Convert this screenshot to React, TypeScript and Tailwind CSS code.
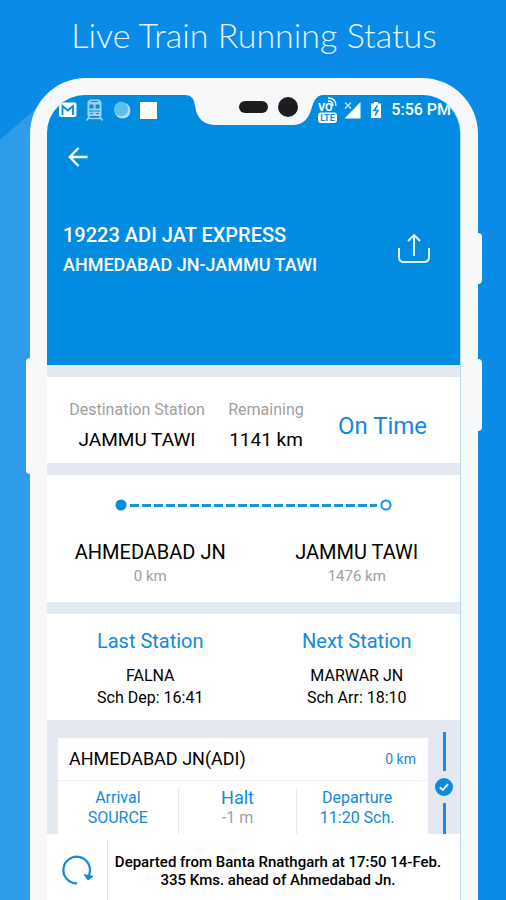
import React from 'react';

const stops = [
  { name: 'AHMEDABAD JN', distance: '0 km' },
  { name: 'JAMMU TAWI', distance: '1476 km' },
];

const nearby = [
  { title: 'Last Station', station: 'FALNA', time: 'Sch Dep: 16:41' },
  { title: 'Next Station', station: 'MARWAR JN', time: 'Sch Arr: 18:10' },
];

const Notch: React.FC = () => (
  <svg
    className="absolute left-1/2 top-0 -translate-x-1/2"
    width="138"
    height="31"
    viewBox="0 0 138 31"
    aria-hidden="true"
  >
    <path d="M0 0C7 0 9 4 10 11C12 24 19 30 31 30H107C119 30 124 23 127 12C129 5 132 0 138 0Z" fill="#f6f8fa" />
    <rect x="54" y="6" width="29" height="12" rx="6" fill="#1d1d20" />
    <circle cx="103" cy="12" r="10" fill="#1d1d20" />
  </svg>
);

const StatusBar: React.FC = () => (
  <div className="flex h-[30px] items-center justify-between pl-3 pr-[9px] text-white">
    <div className="flex items-center gap-[9px]">
      {/* Mail */}
      <svg width="18" height="18" viewBox="0 0 18 18" aria-hidden="true">
        <rect x="0" y="1.500" width="17.500" height="14.500" rx="2" fill="#fff" />
        <path d="M3.500 14V5L8.800 9.500L14 5V14" fill="none" stroke="#018ce1" strokeWidth="1.800" />
      </svg>
      {/* Train */}
      <svg width="18" height="22" viewBox="0 0 18 22" aria-hidden="true">
        <path d="M4 .5H13L15.500 3V17H1.500V3Z" fill="#9dd0f5" />
        <path d="M5 2.500H12" stroke="#018ce1" />
        <rect x="3.500" y="5.500" width="4" height="4" fill="#018ce1" />
        <rect x="9.500" y="5.500" width="4" height="4" fill="#018ce1" />
        <path d="M3 12H14M4 14.500H7M10 14.500H13" stroke="#018ce1" />
        <path d="M3.500 17L.5 21.500M13.500 17L16.500 21.500M2 19.500H15" stroke="#9dd0f5" strokeWidth="1.500" />
      </svg>
      {/* Globe */}
      <svg width="18" height="18" viewBox="0 0 18 18" aria-hidden="true">
        <circle cx="9.500" cy="9.500" r="8" fill="#a5e0f8" />
        <circle cx="8" cy="8" r="7.200" fill="#5cbff0" />
      </svg>
      <svg width="17" height="17" viewBox="0 0 17 17" aria-hidden="true">
        <rect width="17" height="17" fill="#fff" />
      </svg>
    </div>
    <div className="flex items-center gap-[9px]">
      <div className="flex items-center gap-[6px]">
        {/* VoLTE */}
        <svg width="20" height="28" viewBox="0 0 20 28" fontFamily="Roboto, sans-serif" fontWeight="700" aria-hidden="true">
          <text x="0" y="15" fontSize="11" fill="#fff">VO</text>
          <path d="M10 5Q15 5 15 10M10 2Q18 2 18 10" fill="none" stroke="#fff" strokeWidth="1.300" />
          <rect x="0" y="16.500" width="19" height="10.500" rx="3" fill="#fff" />
          <text x="9.500" y="25" fontSize="9" textAnchor="middle" fill="#018ce1">LTE</text>
        </svg>
        {/* Mobile signal */}
        <svg width="17" height="18" viewBox="0 0 17 18" aria-hidden="true">
          <path d="M16.500 1V17.500H.5Z" fill="#fff" />
          <path d="M1 1.500L7 7.500M7 1.500L1 7.500" stroke="#bfe1f8" strokeWidth="1.500" />
        </svg>
      </div>
      {/* Battery */}
      <svg width="12" height="18" viewBox="0 0 12 18" aria-hidden="true">
        <path d="M4 1H8V2.500H11V17H1V2.500H4Z" fill="#fff" />
        <path d="M7.500 4.500L4 9.500H8L5 14.500" fill="none" stroke="#018ce1" strokeWidth="1.500" />
      </svg>
      <span className="text-base leading-5 font-medium">5:56 PM</span>
    </div>
  </div>
);

const Header: React.FC = () => (
  <header className="bg-[#018ce1] pb-[85px] text-white">
    <StatusBar />
    <button type="button" aria-label="Back" className="ml-[21px] mt-[22px] block">
      <svg width="20" height="20" viewBox="0 0 20 20" fill="none" stroke="#fff" strokeWidth="2.400" aria-hidden="true">
        <path d="M10.500 1L1.800 10L10.500 19M2 10H19.500" />
      </svg>
    </button>
    <div className="mt-[53px] flex items-center justify-between pl-4 pr-[30px]">
      <div>
        <h2 className="text-xl leading-[30px] font-medium">19223 ADI JAT EXPRESS</h2>
        <p className="text-lg leading-[30px] font-medium">AHMEDABAD JN-JAMMU TAWI</p>
      </div>
      <button type="button" aria-label="Share">
        <svg width="32" height="32" viewBox="0 0 32 32" fill="none" stroke="#e3f3fd" strokeWidth="2" aria-hidden="true">
          <path d="M1 14V23Q1 28 6 28H26Q31 28 31 23V14" />
          <path d="M16 22V1M10 7L16 1L22 7" />
        </svg>
      </button>
    </div>
  </header>
);

const Summary: React.FC = () => (
  <section className="grid grid-cols-[180fr_78fr_155fr] justify-items-center bg-white pt-[23px] pb-[11px] whitespace-nowrap">
    <div className="flex flex-col items-center gap-2">
      <span className="text-base leading-5 text-[#a0a0a0]">Destination Station</span>
      <span className="text-[19px] leading-6 text-black">JAMMU TAWI</span>
    </div>
    <div className="flex flex-col items-center gap-2">
      <span className="text-base leading-5 text-[#a0a0a0]">Remaining</span>
      <span className="text-[19px] leading-6 text-black">1141 km</span>
    </div>
    <span className="self-center text-2xl leading-7 text-[#1389de]">On Time</span>
  </section>
);

const Route: React.FC = () => (
  <section className="bg-white pt-6 pb-4">
    <div className="flex items-center gap-[3px] px-[68px]">
      <svg className="shrink-0" width="12" height="12" viewBox="0 0 12 12" aria-hidden="true">
        <circle cx="6" cy="6" r="5.500" fill="#018ce1" />
      </svg>
      <svg className="min-w-0 flex-1" height="3" aria-hidden="true">
        <line x1="0" y1="1.500" x2="100%" y2="1.500" stroke="#1a93da" strokeWidth="3" strokeDasharray="9 3" />
      </svg>
      <svg className="shrink-0" width="12" height="12" viewBox="0 0 12 12" aria-hidden="true">
        <circle cx="6" cy="6" r="4.600" fill="#fff" stroke="#1a93da" strokeWidth="2" />
      </svg>
    </div>
    <div className="mt-[27px] grid grid-cols-2 text-center">
      {stops.map((stop) => (
        <div key={stop.name}>
          <h3 className="text-xl leading-7 text-black">{stop.name}</h3>
          <p className="text-[15px] leading-5 text-[#a0a0a0]">{stop.distance}</p>
        </div>
      ))}
    </div>
  </section>
);

const NearbyStations: React.FC = () => (
  <section className="grid grid-cols-2 bg-white pt-[15px] pb-[11px] text-center">
    {nearby.map((item) => (
      <div key={item.title}>
        <h3 className="mb-3 text-xl leading-6 text-[#1389de]">{item.title}</h3>
        <p className="text-base leading-[22px] text-black">{item.station}</p>
        <p className="text-base leading-[22px] text-black">{item.time}</p>
      </div>
    ))}
  </section>
);

const StationList: React.FC = () => (
  <section className="flex pl-[11px]">
    <article className="mt-[6px] flex-1 bg-white">
      <div className="flex items-center justify-between border-b border-[#edf0f4] py-[7px] pl-[11px] pr-3">
        <h3 className="text-lg leading-7 text-black">AHMEDABAD JN(ADI)</h3>
        <span className="text-sm leading-5 text-[#1389de]">0 km</span>
      </div>
      <div className="mt-[7px] grid grid-cols-[120fr_120fr_131fr] text-center text-base leading-5 text-[#1389de]">
        <div className="pb-[6px]">
          <p>Arrival</p>
          <p>SOURCE</p>
        </div>
        <div className="border-x border-[#e6eaef]">
          <p className="text-lg leading-5">Halt</p>
          <p className="text-[#a0a0a0]">-1 m</p>
        </div>
        <div className="pr-[11px]">
          <p>Departure</p>
          <p>11:20 Sch.</p>
        </div>
      </div>
    </article>
    {/* Progress rail */}
    <div className="flex w-8 flex-col items-center">
      <div className="h-[39px] w-[3px] bg-[#1a8bdf]" />
      <svg className="my-[7px]" width="18" height="18" viewBox="0 0 18 18" aria-hidden="true">
        <circle cx="9" cy="9" r="9" fill="#0f8ae0" />
        <path d="M4.800 9.300L7.800 12L13 6.200" fill="none" stroke="#fff" strokeWidth="1.800" />
      </svg>
      <div className="w-[3px] flex-1 bg-[#1a8bdf]" />
    </div>
  </section>
);

const LiveUpdate: React.FC = () => (
  <footer className="flex flex-1 bg-white pt-[6px]">
    <button type="button" aria-label="Refresh" className="flex w-[60px] shrink-0 justify-center pt-[14px]">
      <svg width="32" height="32" viewBox="0 0 32 32" fill="none" stroke="#1389de" strokeWidth="2.200" aria-hidden="true">
        <path d="M16 29.300A13.300 13.300 0 1 1 28 21" />
        <path d="M24 21L27 25.500L31.500 22.500Z" fill="#1389de" strokeWidth="1.500" />
      </svg>
    </button>
    <p className="flex-1 border-l border-[#dfe3e8] pt-[13px] pr-3 text-center text-[15px] leading-[18px] font-medium text-black">
      Departed from Banta Rnathgarh at 17:50 14-Feb.
      <br />
      335 Kms. ahead of Ahmedabad Jn.
    </p>
  </footer>
);

export default function App() {
  return (
    <main className="relative flex min-h-screen flex-col overflow-hidden bg-[#0b8be8] pl-[30px] pr-7 font-['Roboto',sans-serif]">
      {/* Light wedge behind the phone */}
      <div className="absolute top-[98px] bottom-0 left-0 w-12 bg-[#2f9ceb] [clip-path:polygon(0_42px,100%_0,100%_100%,0_100%)]" />

      <h1 className="pt-[15px] pb-[23px] text-center font-['Lato',sans-serif] text-[34px] leading-10 font-light text-[#e6f3fe]">
        Live Train Running Status
      </h1>

      <div className="relative flex flex-1 flex-col">
        {/* Side keys */}
        <div className="absolute top-[280px] -left-1 h-[116px] w-2 rounded-l bg-[#f6f8fa]" />
        <div className="absolute top-[155px] -right-1 h-[51px] w-2 rounded-r bg-[#f6f8fa]" />
        <div className="absolute top-[281px] -right-1 h-[72px] w-2 rounded-r bg-[#f6f8fa]" />

        <div className="relative flex flex-1 flex-col rounded-t-[56px] bg-[#f6f8fa] px-[17px] pt-[17px]">
          <div className="relative flex flex-1 flex-col overflow-hidden rounded-t-[38px] border-r border-[#b5dbf8] bg-[#e4e8f1]">
            <Header />
            <Notch />
            <div className="flex flex-col gap-3 pt-3">
              <Summary />
              <Route />
              <NearbyStations />
              <StationList />
            </div>
            <LiveUpdate />
          </div>
        </div>
      </div>
    </main>
  );
}
